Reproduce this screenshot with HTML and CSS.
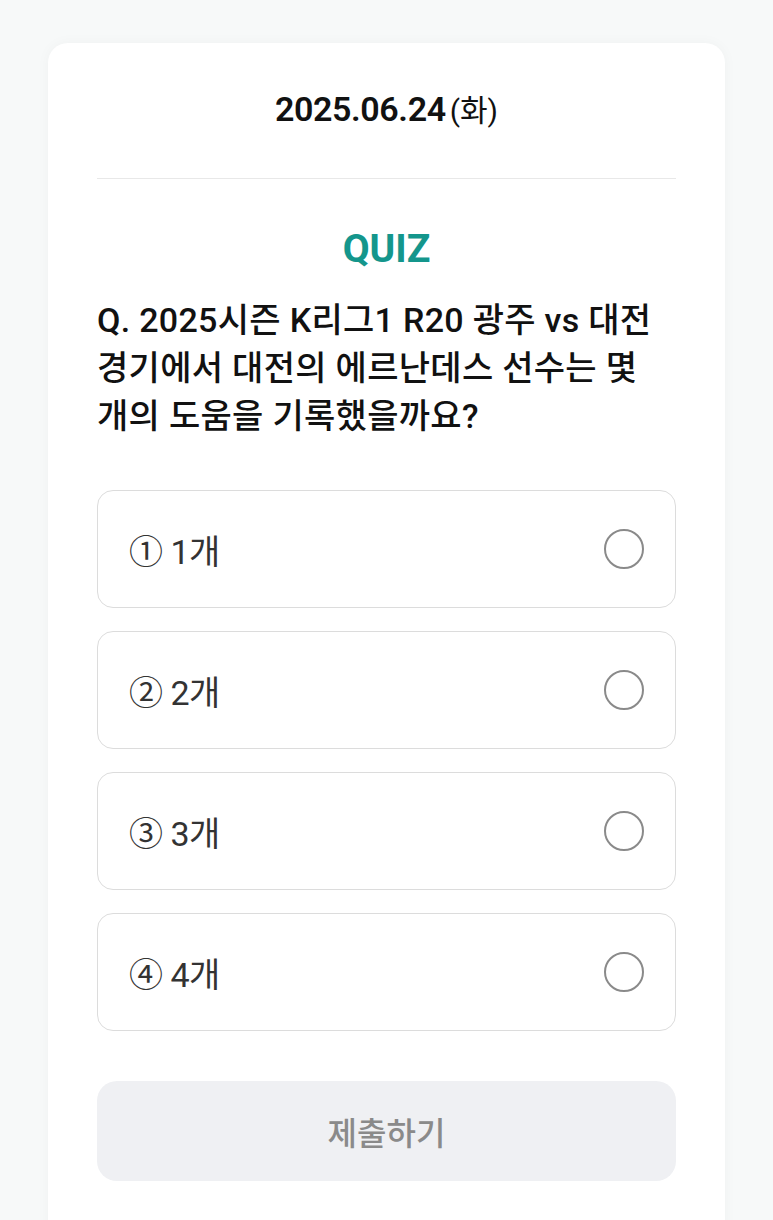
FILE: index.html
```html
<!DOCTYPE html>
<html lang="ko">
<head>
<meta charset="utf-8">
<link rel="stylesheet" href="styles.css">
</head>
<body>
<div class="card">
  <div class="date"><span class="date-num">2025.06.24</span><span class="date-day">(화)</span></div>
  <div class="quiz-label">QUIZ</div>
  <div class="question">Q. 2025시즌 K리그1 R20 광주 vs 대전 경기에서 대전의 에르난데스 선수는 몇 개의 도움을 기록했을까요?</div>
  <div class="options">
    <div class="option"><span class="opt-text">① 1개</span><span class="radio"></span></div>
    <div class="option"><span class="opt-text">② 2개</span><span class="radio"></span></div>
    <div class="option"><span class="opt-text">③ 3개</span><span class="radio"></span></div>
    <div class="option"><span class="opt-text">④ 4개</span><span class="radio"></span></div>
  </div>
  <div class="submit">제출하기</div>
</div>
</body>
</html>
```
FILE: styles.css
```css
html, body {
  margin: 0;
  padding: 0;
  background: #f7f9f9;
  height: 1220px;
  overflow: hidden;
}
body {
  font-family: Roboto, "Noto Sans CJK KR", sans-serif;
  color: #111;
  padding-top: 43px;
}
.card {
  margin: 0 48px;
  background: #fff;
  border-radius: 20px;
  box-shadow: 0 0 14px rgba(0, 0, 0, 0.035);
  padding: 46px 49px 60px;
  min-height: 1200px;
  box-sizing: border-box;
}
.date {
  text-align: center;
  line-height: 40px;
  padding-bottom: 42px;
  border-bottom: 1.5px solid #e8e8e8;
}
.date-num {
  font-size: 34px;
  font-weight: 600;
  letter-spacing: -0.4px;
}
.date-day {
  font-size: 30px;
  font-weight: 400;
  margin-left: 4px;
}
.quiz-label {
  margin-top: 50px;
  text-align: center;
  font-size: 39px;
  font-weight: 700;
  color: #14968c;
  line-height: 40px;
}
.question {
  margin-top: 27px;
  font-size: 34px;
  font-weight: 500;
  line-height: 48px;
  letter-spacing: 0.3px;
  color: #111;
  word-break: keep-all;
}
.options {
  margin-top: 50px;
  display: flex;
  flex-direction: column;
  gap: 23px;
}
.option {
  height: 118px;
  box-sizing: border-box;
  border: 1.5px solid #dcdcdc;
  border-radius: 16px;
  display: flex;
  align-items: center;
  justify-content: space-between;
  padding: 0 31px 0 31px;
}
.opt-text {
  font-size: 34px;
  color: #333;
  letter-spacing: -0.5px;
}
.radio {
  width: 36px;
  height: 36px;
  border: 2px solid #8a8a8a;
  border-radius: 50%;
}
.submit {
  margin-top: 50px;
  height: 100px;
  border-radius: 20px;
  background: #eff0f3;
  display: flex;
  align-items: center;
  justify-content: center;
  font-size: 32px;
  font-weight: 500;
  color: #8a8a8a;
}
```
